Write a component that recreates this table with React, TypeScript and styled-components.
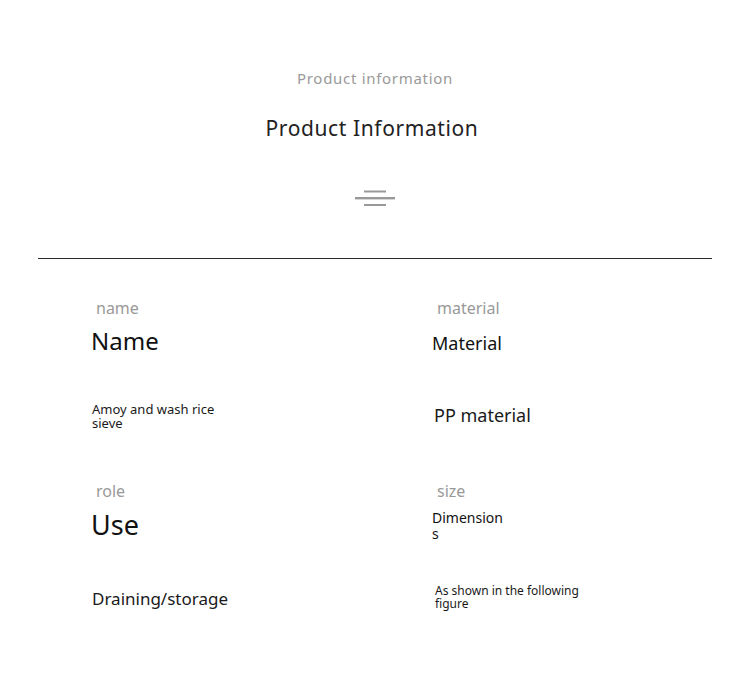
import styled, { createGlobalStyle } from "styled-components";

const GlobalStyle = createGlobalStyle`
  body {
    margin: 0;
    background: #ffffff;
    font-family: "Noto Sans", "Open Sans", sans-serif;
  }
`;

const Page = styled.div`
  width: 750px;
  min-height: 681px;
  background: #ffffff;
`;

const Header = styled.header`
  display: flex;
  flex-direction: column;
  align-items: center;
  padding-top: 66px;
`;

const Subtitle = styled.div`
  font-size: 15px;
  line-height: 24px;
  letter-spacing: 0.7px;
  color: #9a9a9a;
`;

const Title = styled.h1`
  margin: 24px 6px 0 0;
  font-size: 21px;
  line-height: 28px;
  font-weight: 400;
  letter-spacing: 0.6px;
  color: #222222;
`;

const Mark = styled.svg`
  margin-top: 47px;
  display: block;
`;

const Divider = styled.hr`
  margin: 51px 38px 0;
  border: none;
  border-top: 1px solid #2a2a2a;
`;

const SpecGrid = styled.div`
  display: grid;
  grid-template-columns: 341px 1fr;
  padding: 38px 0 0 91px;
`;

const Spec = styled.div`
  display: flex;
  flex-direction: column;
  height: 183px;
`;

const Label = styled.div`
  margin-left: 5px;
  font-size: 16px;
  line-height: 22px;
  color: #999999;
`;

const Heading = styled.div<{ $size: number; $width?: number; $top: number }>`
  margin-top: ${({ $top }) => $top}px;
  font-size: ${({ $size }) => $size}px;
  line-height: ${({ $size }) => Math.round($size * 1.15)}px;
  color: #111111;
  width: ${({ $width }) => ($width ? `${$width}px` : "auto")};
  word-break: break-all;
`;

const Value = styled.div<{
  $size: number;
  $width?: number;
  $top: number;
  $left: number;
}>`
  margin-top: ${({ $top }) => $top}px;
  margin-left: ${({ $left }) => $left}px;
  font-size: ${({ $size }) => $size}px;
  line-height: ${({ $size }) => Math.round($size * 1.1)}px;
  color: #1a1a1a;
  width: ${({ $width }) => ($width ? `${$width}px` : "auto")};
`;

const specs = [
  {
    label: "name",
    heading: "Name",
    headingSize: 24,
    headingTop: 8,
    value: "Amoy and wash rice sieve",
    valueSize: 13,
    valueTop: 47,
    valueLeft: 1,
    valueWidth: 135,
  },
  {
    label: "material",
    heading: "Material",
    headingSize: 18,
    headingTop: 14,
    value: "PP material",
    valueSize: 18,
    valueTop: 51,
    valueLeft: 2,
  },
  {
    label: "role",
    heading: "Use",
    headingSize: 27,
    headingTop: 7,
    value: "Draining/storage",
    valueSize: 17,
    valueTop: 49,
    valueLeft: 1,
  },
  {
    label: "size",
    heading: "Dimensions",
    headingSize: 14,
    headingTop: 8,
    headingWidth: 74,
    value: "As shown in the following figure",
    valueSize: 12,
    valueTop: 42,
    valueLeft: 3,
    valueWidth: 150,
  },
];

export default function App() {
  return (
    <Page>
      <GlobalStyle />
      <Header>
        <Subtitle>Product information</Subtitle>
        <Title>Product Information</Title>
        <Mark width="40" height="18" viewBox="0 0 40 18" aria-hidden="true">
          <rect x="9" y="1.5" width="22" height="2" fill="#999999" />
          <rect x="0" y="8" width="40" height="2.4" fill="#999999" />
          <rect x="9" y="15" width="22" height="2" fill="#999999" />
        </Mark>
      </Header>
      <Divider />
      <SpecGrid>
        {specs.map((spec) => (
          <Spec key={spec.label}>
            <Label>{spec.label}</Label>
            <Heading
              $size={spec.headingSize}
              $top={spec.headingTop}
              $width={spec.headingWidth}
            >
              {spec.heading}
            </Heading>
            <Value
              $size={spec.valueSize}
              $top={spec.valueTop}
              $left={spec.valueLeft}
              $width={spec.valueWidth}
            >
              {spec.value}
            </Value>
          </Spec>
        ))}
      </SpecGrid>
    </Page>
  );
}
